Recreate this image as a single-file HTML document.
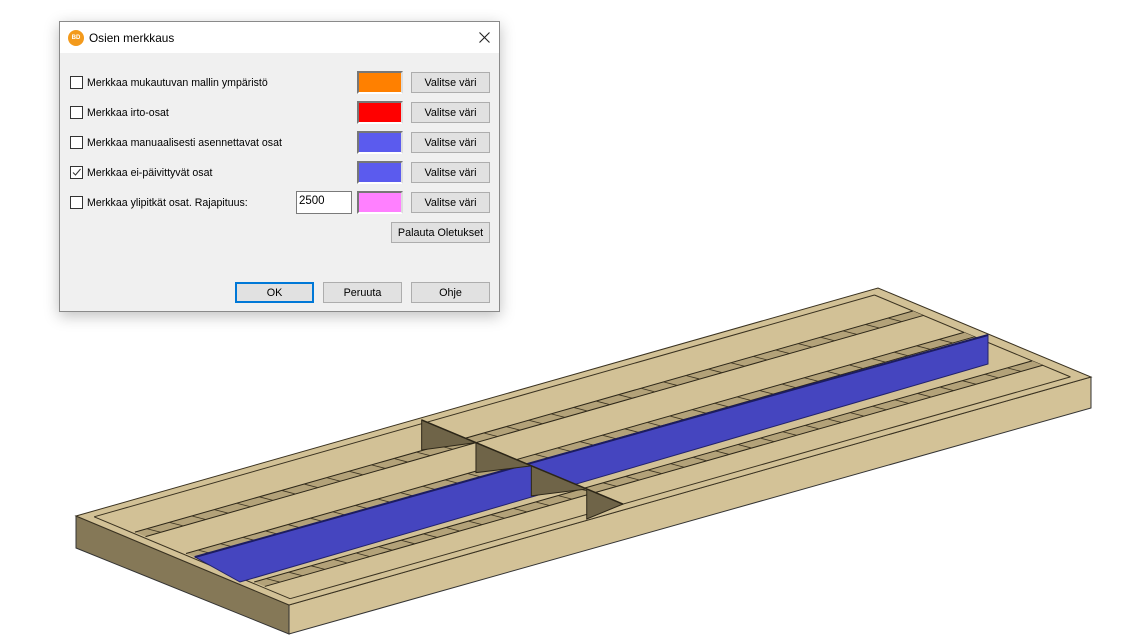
<!DOCTYPE html>
<html><head><meta charset="utf-8"><style>
body{margin:0;width:1146px;height:641px;background:#fff;position:relative;overflow:hidden;font-family:"Liberation Sans",sans-serif;font-size:12px;color:#000}
.dlg{position:absolute;left:59px;top:21px;width:439px;height:289px;background:#f0f0f0;border:1px solid #8a8a8a;box-shadow:0 4px 14px rgba(0,0,0,.25)}
.tb{position:absolute;left:0;top:0;width:439px;height:31px;background:#fff}
.ttl{position:absolute;left:29px;top:9px;font-size:11.8px}
.ico{position:absolute;left:8px;top:8px;width:16px;height:16px;border-radius:50%;background:#f39a1c;color:#fff;font-size:6px;font-weight:bold;text-align:center;line-height:16px}
.row{position:absolute;left:10px;height:20px}
.cb{position:absolute;left:0;top:3px;width:11px;height:11px;border:1px solid #333;background:#fff}
.lb{position:absolute;left:17px;top:4px;white-space:nowrap;font-size:10.6px}
.sw{position:absolute;left:297px;width:42px;height:19px;border:2px solid #777;border-right-color:#ddd;border-bottom-color:#fff}
.btn{position:absolute;width:77px;height:19px;border:1px solid #adadad;background:#e1e1e1;text-align:center;line-height:20px;font-size:10.8px}
</style></head><body>
<svg id="s" width="1146" height="641" style="position:absolute;left:0;top:0"></svg>
<div class="dlg">
<div class="tb"><div class="ico">BD</div><div class="ttl">Osien merkkaus</div>
<svg style="position:absolute;left:419px;top:10px" width="11" height="11"><path d="M0.5 0.5L10.5 10.5M10.5 0.5L0.5 10.5" stroke="#222" stroke-width="1.1"/></svg></div>
<div class="row" style="top:51px"><div class="cb"></div><div class="lb">Merkkaa mukautuvan mallin ympäristö</div></div>
<div class="row" style="top:81px"><div class="cb"></div><div class="lb">Merkkaa irto-osat</div></div>
<div class="row" style="top:111px"><div class="cb"></div><div class="lb">Merkkaa manuaalisesti asennettavat osat</div></div>
<div class="row" style="top:141px"><div class="cb"><svg width="11" height="11" style="position:absolute;left:0;top:0"><path d="M2 5.5L4.5 8L9.5 2" stroke="#333" fill="none" stroke-width="1"/></svg></div><div class="lb">Merkkaa ei-päivittyvät osat</div></div>
<div class="row" style="top:171px"><div class="cb"></div><div class="lb">Merkkaa ylipitkät osat. Rajapituus:</div></div>
<div style="position:absolute;left:236px;top:169px;width:52px;height:21px;border:1px solid #7a7a7a;background:#fff;font-size:11.5px;line-height:18px;padding-left:2px">2500</div>
<div class="sw" style="top:49px;background:#ff8000"></div>
<div class="sw" style="top:79px;background:#ff0000"></div>
<div class="sw" style="top:109px;background:#5b5bee"></div>
<div class="sw" style="top:139px;background:#5b5bee"></div>
<div class="sw" style="top:169px;background:#ff80ff"></div>
<div class="btn" style="left:351px;top:50px">Valitse väri</div>
<div class="btn" style="left:351px;top:80px">Valitse väri</div>
<div class="btn" style="left:351px;top:110px">Valitse väri</div>
<div class="btn" style="left:351px;top:140px">Valitse väri</div>
<div class="btn" style="left:351px;top:170px">Valitse väri</div>
<div class="btn" style="left:331px;top:200px;width:97px">Palauta Oletukset</div>
<div class="btn" style="left:175px;top:260px;border:2px solid #0078d7;height:17px;line-height:18px;width:75px">OK</div>
<div class="btn" style="left:263px;top:260px">Peruuta</div>
<div class="btn" style="left:351px;top:260px">Ohje</div>
</div>
<script>
var s=document.getElementById('s'),h='';
function P(u,v){return[76+802*u+213*v,516-228*u+89*v];}
function poly(pts,f,st){h+='<polygon points="'+pts.map(p=>p.join(',')).join(' ')+'" fill="'+f+'"'+(st?' stroke="'+st+'" stroke-width="1"':'')+'/>';}
function ln(a,b,c,w){h+='<line x1="'+a[0]+'" y1="'+a[1]+'" x2="'+b[0]+'" y2="'+b[1]+'" stroke="'+c+'" stroke-width="'+(w||1)+'"/>';}
var A=P(0,0),B=P(1,0),C=P(1,1),D=P(0,1);
poly([A,D,[D[0],D[1]+29],[A[0],A[1]+32]],'#857857','#333');
poly([D,C,[C[0],C[1]+31],[D[0],D[1]+29]],'#d3c297','#333');
poly([A,B,C,D],'#d2c196','#3a3220');
var ia=P(0.012,0.04),ib=P(0.985,0.04),ic=P(0.985,0.96),id=P(0.012,0.96);
ln(ia,ib,'#3a3220');ln(ib,ic,'#3a3220');ln(ic,id,'#3a3220');ln(id,ia,'#3a3220');
[0.22,0.46,0.78].forEach(function(v){
 var a=P(0.015,v),b=P(0.985,v),c=P(0.985,v+0.05),d=P(0.015,v+0.05);
 poly([a,b,c,d],'#b3a279');ln(a,b,'#2c2618');ln(d,c,'#2c2618');
 for(var u=0.03;u<0.98;u+=0.028){ln(P(u,v),P(u+0.004,v+0.05),'#3a3220',0.8);}
});
poly([[195,557],[988,335],[988,364],[240,582]],'#4545bf','#22226a');
ln([195,557],[988,335],'#1c1c60',2);
var cu=0.427,vs=[0.015,0.27,0.53,0.79,0.96];
for(var i=0;i<4;i++){var a=P(cu,vs[i]),b=P(cu,vs[i+1]);
 poly([a,[a[0],a[1]+30],b],'#6f6448','#2c2618');}
ln(P(cu,0.015),P(cu,0.96),'#2c2618',1.5);
s.innerHTML=h;
</script>
</body></html>
